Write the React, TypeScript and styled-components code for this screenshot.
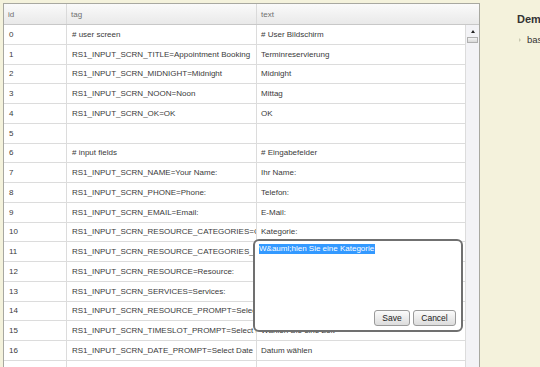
import * as React from "react"
import styled, { createGlobalStyle } from "styled-components"

const GlobalStyle = createGlobalStyle`
  html, body {
    margin: 0;
    padding: 0;
    width: 540px;
    height: 367px;
    overflow: hidden;
    background: #f4f2dc;
    font-family: "Liberation Sans", Arial, sans-serif;
  }
`

const Page = styled.div`
  display: flex;
  align-items: flex-start;
  padding: 3px 0 0 3px;
  height: 367px;
  box-sizing: border-box;
`

const Grid = styled.div`
  position: relative;
  width: 477px;
  height: 370px;
  flex-shrink: 0;
  border: 1px solid #a8a8a0;
  background: #fff;
  box-sizing: border-box;
`

const HeaderRow = styled.div`
  display: grid;
  grid-template-columns: 63px 190px 1fr;
  height: 21px;
  background: linear-gradient(#fafafa, #e9e9e9);
  border-bottom: 1px solid #c8c8c8;
  box-sizing: border-box;
`

const HeaderCell = styled.div`
  display: flex;
  align-items: center;
  padding-left: 4px;
  font-size: 8px;
  color: #707070;
  border-right: 1px solid #dadada;
  &:last-child { border-right: none; }
`

const Body = styled.div`
  display: flex;
`

const Rows = styled.div`
  width: 462px;
`

const Row = styled.div`
  display: grid;
  grid-template-columns: 63px 190px 209px;
  height: 19.75px;
`

const Cell = styled.div<{ $pad?: number }>`
  display: flex;
  align-items: center;
  padding-left: ${(p) => p.$pad ?? 4}px;
  font-size: 8px;
  color: #3a3a3a;
  white-space: nowrap;
  overflow: hidden;
  border-right: 1px solid #dcdcdc;
  border-bottom: 1px solid #dcdcdc;
  box-sizing: border-box;
`

const ScrollTrack = styled.div`
  width: 13px;
  height: 345px;
  background: #f3f3f6;
  display: flex;
  flex-direction: column;
  align-items: center;
  padding-top: 5px;
  gap: 4px;
  box-sizing: border-box;
`

const ScrollArrow = styled.div`
  width: 0;
  height: 0;
  border-left: 2.5px solid transparent;
  border-right: 2.5px solid transparent;
  border-bottom: 3px solid #222;
`

const ScrollThumb = styled.div`
  width: 11px;
  height: 6px;
  background: linear-gradient(#f4f4f4, #d8d8d8);
  border: 1px solid #b0b0b0;
  box-sizing: border-box;
`

const Editor = styled.div`
  position: absolute;
  left: 249px;
  top: 235px;
  width: 210px;
  height: 93px;
  background: #fff;
  border: 2px solid #707070;
  border-radius: 6px;
  box-sizing: border-box;
  display: flex;
  flex-direction: column;
  justify-content: space-between;
  padding: 3px 5px 4px 4px;
  z-index: 2;
`

const Selected = styled.span`
  align-self: flex-start;
  background: #3399ff;
  color: #fff;
  font-size: 8px;
  line-height: 10px;
  padding-right: 1px;
`

const Actions = styled.div`
  display: flex;
  justify-content: flex-end;
  gap: 3px;
`

const Button = styled.button<{ $w: number }>`
  width: ${(p) => p.$w}px;
  height: 16px;
  padding: 0;
  font-family: "Liberation Sans", Arial, sans-serif;
  font-size: 8.5px;
  color: #222;
  background: linear-gradient(#fbfbfb, #dcdcdc);
  border: 1px solid #9a9a9a;
  border-radius: 3px;
`

const Side = styled.div`
  padding: 10px 0 0 37px;
  white-space: nowrap;
`

const SideTitle = styled.div`
  font-size: 11px;
  font-weight: bold;
  color: #333;
`

const SideItem = styled.div`
  display: flex;
  align-items: center;
  gap: 6px;
  margin-top: 9px;
  margin-left: 2px;
  font-size: 9.5px;
  color: #333;
`

const Bullet = styled.span`
  width: 0;
  height: 0;
  border-top: 2.5px solid transparent;
  border-bottom: 2.5px solid transparent;
  border-left: 2.5px solid #c8c8b0;
`

// text column of rows 11–14 is hidden under the open editor
const rows: [string, string, string][] = [
  ["0", "# user screen", "# User Bildschirm"],
  ["1", "RS1_INPUT_SCRN_TITLE=Appointment Booking", "Terminreservierung"],
  ["2", "RS1_INPUT_SCRN_MIDNIGHT=Midnight", "Midnight"],
  ["3", "RS1_INPUT_SCRN_NOON=Noon", "Mittag"],
  ["4", "RS1_INPUT_SCRN_OK=OK", "OK"],
  ["5", "", ""],
  ["6", "# input fields", "# Eingabefelder"],
  ["7", "RS1_INPUT_SCRN_NAME=Your Name:", "Ihr Name:"],
  ["8", "RS1_INPUT_SCRN_PHONE=Phone:", "Telefon:"],
  ["9", "RS1_INPUT_SCRN_EMAIL=Email:", "E-Mail:"],
  ["10", "RS1_INPUT_SCRN_RESOURCE_CATEGORIES=Categories:", "Kategorie:"],
  ["11", "RS1_INPUT_SCRN_RESOURCE_CATEGORIES_PROMPT=Select a Category", ""],
  ["12", "RS1_INPUT_SCRN_RESOURCE=Resource:", ""],
  ["13", "RS1_INPUT_SCRN_SERVICES=Services:", ""],
  ["14", "RS1_INPUT_SCRN_RESOURCE_PROMPT=Select a Resource", ""],
  ["15", "RS1_INPUT_SCRN_TIMESLOT_PROMPT=Select a Time", "Wählen Sie eine Zeit"],
  ["16", "RS1_INPUT_SCRN_DATE_PROMPT=Select Date", "Datum wählen"],
  ["17", "RS1_INPUT_SCRN_TIME_PROMPT=Select Time", "Zeit wählen"],
]

export default function App() {
  return (
    <>
      <GlobalStyle />
      <Page>
        <Grid>
          <HeaderRow>
            <HeaderCell>id</HeaderCell>
            <HeaderCell>tag</HeaderCell>
            <HeaderCell>text</HeaderCell>
          </HeaderRow>
          <Body>
            <Rows>
              {rows.map(([id, tag, text]) => (
                <Row key={id}>
                  <Cell $pad={5}>{id}</Cell>
                  <Cell $pad={5}>{tag}</Cell>
                  <Cell>{text}</Cell>
                </Row>
              ))}
            </Rows>
            <ScrollTrack>
              <ScrollArrow />
              <ScrollThumb />
            </ScrollTrack>
          </Body>
          <Editor>
            <Selected>W&amp;auml;hlen Sie eine Kategorie</Selected>
            <Actions>
              <Button $w={36}>Save</Button>
              <Button $w={43}>Cancel</Button>
            </Actions>
          </Editor>
        </Grid>
        <Side>
          <SideTitle>Demo</SideTitle>
          <SideItem>
            <Bullet />
            basic
          </SideItem>
        </Side>
      </Page>
    </>
  )
}
